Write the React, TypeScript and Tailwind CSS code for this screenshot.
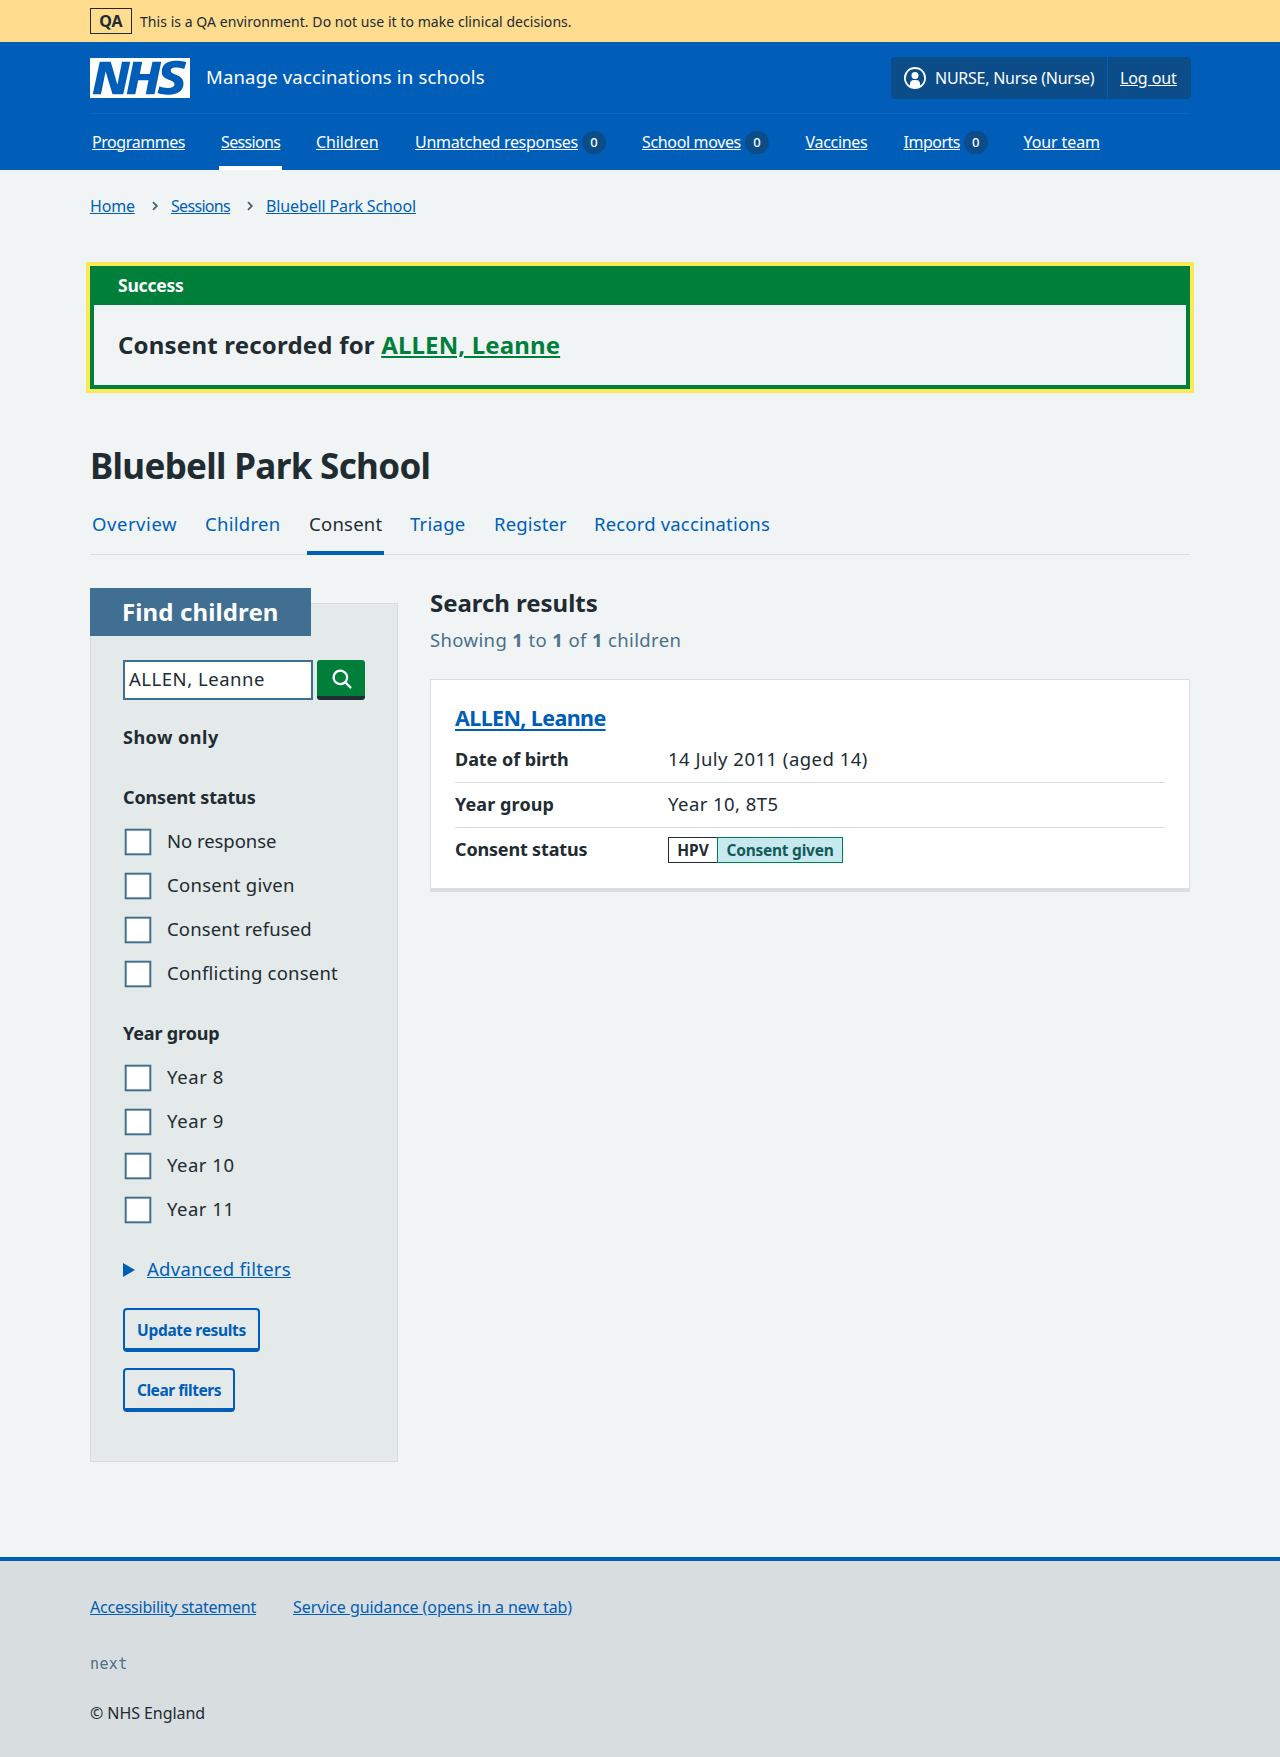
const link = 'text-[#005eb8] underline';

function Logo() {
  return (
    <svg width="100" height="40" viewBox="0 0 200 80" className="shrink-0 text-white" role="img" aria-label="NHS">
      <path
        fill="currentColor"
        d="M200 0v80H0V0h200Zm-27.5 5.5c-14.5 0-29 5-29 22 0 10.2 7.7 13.5 14.7 16.3l.7.3c5.4 2 10.1 3.9 10.1 8.4 0 6.5-8.5 7.5-14 7.5s-12.5-1.5-16-3.5L135 70c5.5 2 13.5 3.5 20 3.5 15.5 0 32-4.5 32-22.5 0-19.5-25.5-16.5-25.5-25.5 0-5.5 5.5-6.5 12.5-6.5a35 35 0 0 1 14.5 3l4-13.5c-4.5-2-12-3-20-3Zm-131 2h-22l-14 65H22l9-45h.5l13.5 45h21.5l14-65H64l-9 45h-.5l-13-45Zm63 0h-18l-13 65h17l6-28H117l-5.5 28H129l13.5-65H125L119.5 32h-20l5-24.5Z"
      />
    </svg>
  );
}

function UserIcon() {
  return (
    <svg width="24" height="24" viewBox="0 0 24 24" className="shrink-0" fill="#fff">
      <path d="M12 1a11 11 0 1 1 0 22 11 11 0 0 1 0-22Zm0 2a9 9 0 0 0-5 16.5V18a4 4 0 0 1 4-4h2a4 4 0 0 1 4 4v1.5A9 9 0 0 0 12 3Zm0 3a3.5 3.5 0 1 1-3.5 3.5A3.4 3.4 0 0 1 12 6Z" />
    </svg>
  );
}

function SearchIcon() {
  return (
    <svg width="27" height="27" viewBox="0 0 24 24" fill="#fff">
      <path d="m20.7 19.3-4.1-4.1a7 7 0 1 0-1.4 1.4l4 4.1a1 1 0 0 0 1.5 0c.4-.4.4-1 0-1.4ZM6 11a5 5 0 1 1 10 0 5 5 0 0 1-10 0Z" />
    </svg>
  );
}

function Chevron() {
  return (
    <svg width="7" height="10" viewBox="0 0 7 10" fill="none" stroke="#4c6272" strokeWidth="1.8">
      <path d="M1 1.2 4.8 5 1 8.8" />
    </svg>
  );
}

const navItems = [
  { label: 'Programmes', size: 'w-[97px] tracking-[-0.43px]' },
  { label: 'Sessions', size: 'w-[63px] tracking-[-0.65px]', current: true },
  { label: 'Children', size: 'w-[67px] tracking-[-0.1px]' },
  { label: 'Unmatched responses', size: 'w-[195px] tracking-[-0.3px]', count: 0 },
  { label: 'School moves', size: 'w-[131.5px] tracking-[-0.35px]', count: 0 },
  { label: 'Vaccines', size: 'w-[66px] tracking-[-0.3px]' },
  { label: 'Imports', size: 'w-[88px] tracking-[-0.5px]', count: 0 },
  { label: 'Your team', size: 'w-[81px] tracking-[-0.1px]' },
];

const tabs = [
  { label: 'Overview', size: 'w-[89px] tracking-[0.55px]' },
  { label: 'Children', size: 'w-[80px] tracking-[0.3px]' },
  { label: 'Consent', size: 'w-[77px] tracking-[0.25px]', current: true },
  { label: 'Triage', size: 'w-[60px] tracking-[0.25px]' },
  { label: 'Register', size: 'w-[76px] tracking-[0.15px]' },
  { label: 'Record vaccinations', size: 'w-[180px] tracking-[0.18px]' },
];

function Header() {
  return (
    <header className="h-32 bg-[#005eb8] text-white">
      <div className="mx-auto w-[1100px]">
        <div className="flex h-[72px] justify-between border-b border-white/5">
          <div className="flex pt-4">
            <Logo />
            <span className="ml-4 mt-[1px] text-[18.5px] leading-9 tracking-[0.17px]">Manage vaccinations in schools</span>
          </div>
          <div className="-mr-px mt-[15px] flex h-[42px] w-[300px] rounded-[4px] bg-[#0b4c89] text-[16px] leading-[42px]">
            <div className="flex w-[217px] items-center border-r border-[#005eb8] pl-3">
              <UserIcon />
              <span className="ml-2 tracking-[-0.25px]">NURSE, Nurse (Nurse)</span>
            </div>
            <a className="ml-3 tracking-[-0.1px] underline">Log out</a>
          </div>
        </div>
        <nav className="flex h-14 gap-8 text-[16px] leading-[55px]">
          {navItems.map((n) => (
            <div
              key={n.label}
              className={`flex items-center whitespace-nowrap px-0.5 ${n.size} ${n.current ? 'border-b-4 border-white pt-1' : ''}`}
            >
              <a className="underline">{n.label}</a>
              {n.count !== undefined && (
                <span className="ml-1 h-[23px] w-6 rounded-full bg-[#0b4c89] text-center text-[13px] font-medium leading-[23px] tracking-normal">
                  {n.count}
                </span>
              )}
            </div>
          ))}
        </nav>
      </div>
    </header>
  );
}

function CheckboxGroup({ title, items }: { title: string; items: { label: string; track: string }[] }) {
  return (
    <fieldset>
      <legend className="h-5 text-[18px] font-bold leading-5 tracking-[-0.15px]">{title}</legend>
      <div className="mt-[13px]">
        {items.map((i) => (
          <label key={i.label} className="flex h-11 items-center text-[18.5px] leading-[22px]">
            <span className="-ml-[4.6px] h-10 w-10 shrink-0 scale-[0.6667] border-[3px] border-[#41708f] bg-white" />
            <span className={`mb-[2px] ml-[8.6px] ${i.track}`}>{i.label}</span>
          </label>
        ))}
      </div>
    </fieldset>
  );
}

function Filters() {
  return (
    <aside className="mt-[15px] h-[859px] w-[308px] border border-[#d8dddf] bg-[#e4e9e9]">
      <h2 className="-ml-px -mt-4 h-12 w-[221px] bg-[#416f91] pl-8 text-[24px] font-bold leading-[48px] tracking-[0.12px] text-white">
        Find children
      </h2>
      <div className="px-8 pt-6">
        <div className="flex gap-1">
          <div className="h-10 w-[190px] border-2 border-[#41708f] bg-white pl-1 text-[18.5px] leading-[34px] tracking-[0.52px]">
            ALLEN, Leanne
          </div>
          <button className="flex h-10 w-12 items-center justify-center rounded-[3px] border-b-4 border-[#212b32] bg-[#007f3b]">
            <SearchIcon />
          </button>
        </div>
        <p className="mt-[27px] h-5 text-[18px] font-bold leading-5 tracking-[0.5px]">Show only</p>
        <div className="mt-10">
          <CheckboxGroup
            title="Consent status"
            items={[
              { label: 'No response', track: 'tracking-[-0.05px]' },
              { label: 'Consent given', track: 'tracking-[0.28px]' },
              { label: 'Consent refused', track: 'tracking-[0.14px]' },
              { label: 'Conflicting consent', track: 'tracking-[0.2px]' },
            ]}
          />
        </div>
        <div className="mt-[27px]">
          <CheckboxGroup
            title="Year group"
            items={[
              { label: 'Year 8', track: 'tracking-[0.6px]' },
              { label: 'Year 9', track: 'tracking-[0.6px]' },
              { label: 'Year 10', track: 'tracking-[0.5px]' },
              { label: 'Year 11', track: 'tracking-[0.5px]' },
            ]}
          />
        </div>
        <div className="mt-[25px] flex h-6 items-center text-[18.5px] leading-6">
          <svg width="12" height="14" viewBox="0 0 12 14" fill="#005eb8" className="mt-px">
            <path d="M0 0 12 7 0 14Z" />
          </svg>
          <a className={`ml-3 tracking-[0.28px] ${link}`}>Advanced filters</a>
        </div>
        <div className="mt-[27px] flex flex-col items-start gap-4 text-[15.5px] font-bold text-[#005eb8]">
          <button className="h-11 w-[137px] rounded-[4px] border-2 border-b-4 border-[#005eb8] tracking-[-0.33px]">
            <span className="block h-[38px] leading-[40px]">Update results</span>
          </button>
          <button className="h-11 w-[112px] rounded-[4px] border-2 border-b-4 border-[#005eb8] tracking-[-0.45px]">
            <span className="block h-[38px] leading-[40px]">Clear filters</span>
          </button>
        </div>
      </div>
    </aside>
  );
}

function Results() {
  return (
    <section className="ml-8 w-[760px]">
      <h2 className="h-8 text-[24px] font-bold leading-[30px] tracking-[-0.04px]">Search results</h2>
      <p className="mt-[6px] h-7 text-[18.5px] leading-7 tracking-[0.37px] text-[#4c6f8a]">
        Showing <b className="font-bold">1</b> to <b className="font-bold">1</b> of <b className="font-bold">1</b>{' '}
        children
      </p>
      <div className="mt-[25px] h-[213px] border border-b-4 border-[#d8dddf] bg-white px-6 pt-6">
        <a className="block h-[30px] text-[21.5px] font-bold leading-[28px] tracking-[-0.62px] text-[#005eb8] underline decoration-2 underline-offset-[3px]">
          ALLEN, Leanne
        </a>
        <dl className="mt-1 text-[18px]">
          <div className="flex h-[45px] border-b border-[#d8dddf] leading-[42px]">
            <dt className="w-[213px] font-bold tracking-[-0.05px]">Date of birth</dt>
            <dd className="text-[18.5px] tracking-[0.48px]">14 July 2011 (aged 14)</dd>
          </div>
          <div className="flex h-[45px] border-b border-[#d8dddf] leading-[42px]">
            <dt className="w-[213px] font-bold tracking-[0.1px]">Year group</dt>
            <dd className="text-[18.5px] tracking-[0.45px]">Year 10, 8T5</dd>
          </div>
          <div className="flex h-[45px] leading-[42px]">
            <dt className="w-[213px] font-bold tracking-[-0.17px]">Consent status</dt>
            <dd className="mt-[9px] flex h-[26px] text-[15.5px] font-bold leading-[24px]">
              <span className="w-[49px] border border-r-0 border-[#212b32] text-center">HPV</span>
              <span className="w-[126px] border border-[#00804a] bg-[#c5e9ef] text-center tracking-[-0.25px] text-[#155a58]">
                Consent given
              </span>
            </dd>
          </div>
        </dl>
      </div>
    </section>
  );
}

export default function App() {
  return (
    <div className="flex h-[1757px] flex-col bg-[#f0f4f5] font-['Noto_Sans',sans-serif] text-[#212b32]">
      <div className="h-[42px] bg-[#ffdc8e]">
        <div className="mx-auto flex h-full w-[1100px] items-center">
          <strong className="h-[26px] w-[42px] border border-[#212b32] text-center text-[16px] font-bold leading-6">QA</strong>
          <span className="ml-2 pt-[2px] text-[14px] leading-5 tracking-[0.05px]">
            This is a QA environment. Do not use it to make clinical decisions.
          </span>
        </div>
      </div>
      <Header />
      <main className="mx-auto w-[1100px]">
        <div className="mt-6 flex h-6 items-center text-[16px] leading-6">
          <a className={`w-[62px] tracking-[-0.2px] ${link}`}>Home</a>
          <Chevron />
          <a className={`ml-3 w-[76px] tracking-[-0.68px] ${link}`}>Sessions</a>
          <Chevron />
          <a className={`ml-3 tracking-[-0.13px] ${link}`}>Bluebell Park School</a>
        </div>
        <div className="mt-12 h-[123px] border-4 border-[#007f3b] outline-4 outline-[#fbe955]">
          <h2 className="h-[35px] bg-[#007f3b] pl-6 text-[17.5px] font-bold leading-[30px] tracking-[-0.2px] text-white">
            Success
          </h2>
          <p className="pl-6 text-[24px] font-bold leading-[80px] tracking-[0.2px]">
            Consent recorded for <a className="tracking-[0.14px] text-[#007f3b] underline">ALLEN, Leanne</a>
          </p>
        </div>
        <h1 className="mt-[52px] h-[50px] text-[35px] font-bold leading-[50px] tracking-[-0.67px]">Bluebell Park School</h1>
        <nav className="mt-[13px] flex h-[51px] gap-6 border-b border-[#d8dddf] text-[18.5px] leading-[40px]">
          {tabs.map((t) => (
            <a
              key={t.label}
              className={`h-[51px] whitespace-nowrap px-0.5 ${t.size} ${
                t.current ? 'border-b-4 border-[#005eb8] text-[#212b32]' : 'text-[#005eb8]'
              }`}
            >
              {t.label}
            </a>
          ))}
        </nav>
        <div className="mt-[33px] flex">
          <Filters />
          <Results />
        </div>
      </main>
      <footer className="mt-auto h-[200px] border-t-4 border-[#005eb8] bg-[#d8dddf] text-[16px]">
        <div className="mx-auto w-[1100px] pt-[34px]">
          <div className="flex h-6 leading-6">
            <a className={`w-[203px] tracking-[-0.23px] ${link}`}>Accessibility statement</a>
            <a className={`tracking-[-0.08px] ${link}`}>Service guidance (opens in a new tab)</a>
          </div>
          <p className="mt-[33px] h-6 font-['DejaVu_Sans_Mono',monospace] text-[15px] leading-6 tracking-[0.35px] text-[#4c6f8a]">next</p>
          <p className="mt-[25px] h-6 leading-6 tracking-[-0.07px]">© NHS England</p>
        </div>
      </footer>
    </div>
  );
}
